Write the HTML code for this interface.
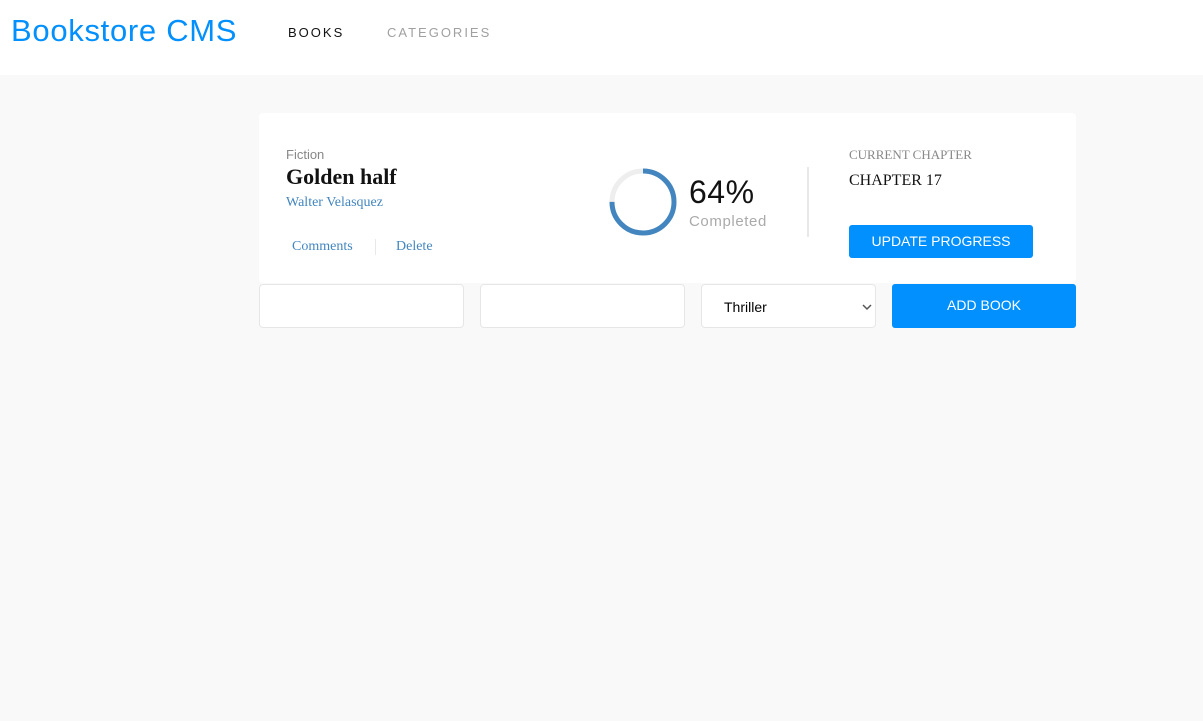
<!DOCTYPE html>
<html><head><style>
*{margin:0;padding:0;box-sizing:border-box}
body{width:1203px;height:721px;background:#f9f9f9;position:relative;font-family:"Liberation Sans",sans-serif;overflow:hidden}
.a{position:absolute;white-space:nowrap}
header{position:absolute;left:0;top:0;width:1203px;height:75px;background:#fff}
.card{position:absolute;left:259px;top:113px;width:817px;height:170px;background:#fff;border-radius:4px}
.inp{position:absolute;top:284px;height:44px;background:#fff;border:1px solid #e6e6e6;border-radius:4px}
.btn{position:absolute;background:#0290ff;color:#fff;border-radius:3px;text-align:center}
.serif{font-family:"Liberation Serif",serif}
</style></head><body>
<header>
<div class="a" style="left:11px;top:13px;font-size:31px;letter-spacing:0.7px;color:#0290ff">Bookstore CMS</div>
<div class="a" style="left:288px;top:25px;font-size:13px;letter-spacing:2px;color:#121212">BOOKS</div>
<div class="a" style="left:387px;top:25px;font-size:13px;letter-spacing:2px;color:#a0a0a0">CATEGORIES</div>
</header>
<div class="card"></div>
<div class="a" style="left:286px;top:147px;font-size:13px;color:#888">Fiction</div>
<div class="a serif" style="left:286px;top:164px;font-size:22px;font-weight:bold;color:#121212">Golden half</div>
<div class="a serif" style="left:286px;top:195px;font-size:14px;color:#4386bf">Walter Velasquez</div>
<div class="a serif" style="left:292px;top:239px;font-size:14px;color:#4386bf">Comments</div>
<div class="a" style="left:375px;top:239px;width:1px;height:16px;background:#e8e8e8"></div>
<div class="a serif" style="left:396px;top:239px;font-size:14px;color:#4386bf">Delete</div>
<svg class="a" style="left:607px;top:166px" width="72" height="72" viewBox="0 0 72 72">
<circle cx="36" cy="36" r="31" fill="none" stroke="#eee" stroke-width="5"/>
<circle cx="36" cy="36" r="31" fill="none" stroke="#4386bf" stroke-width="5" stroke-dasharray="146 200" transform="rotate(-90 36 36)"/>
</svg>
<div class="a" style="left:689px;top:174px;font-size:32px;color:#121212;letter-spacing:0.5px">64%</div>
<div class="a" style="left:689px;top:213px;font-size:15px;color:#aaa;letter-spacing:0.6px">Completed</div>
<div class="a" style="left:807px;top:167px;width:2px;height:70px;background:#e8e8e8"></div>
<div class="a serif" style="left:849px;top:147px;font-size:13px;color:#888">CURRENT CHAPTER</div>
<div class="a serif" style="left:849px;top:172px;font-size:16px;color:#121212">CHAPTER 17</div>
<div class="btn" style="left:849px;top:225px;width:184px;height:33px;line-height:33px;font-size:14px">UPDATE PROGRESS</div>
<div class="inp" style="left:259px;width:205px"></div>
<div class="inp" style="left:480px;width:205px"></div>
<div class="inp" style="left:701px;width:175px"><span class="a" style="left:22px;top:14px;font-size:14px;color:#000">Thriller</span>
<svg class="a" style="left:160px;top:18px" width="10" height="8"><path d="M1 2 L5 6 L9 2" fill="none" stroke="#555" stroke-width="1.5"/></svg></div>
<div class="btn" style="left:892px;top:284px;width:184px;height:44px;line-height:43px;font-size:14px">ADD BOOK</div>
</body></html>
